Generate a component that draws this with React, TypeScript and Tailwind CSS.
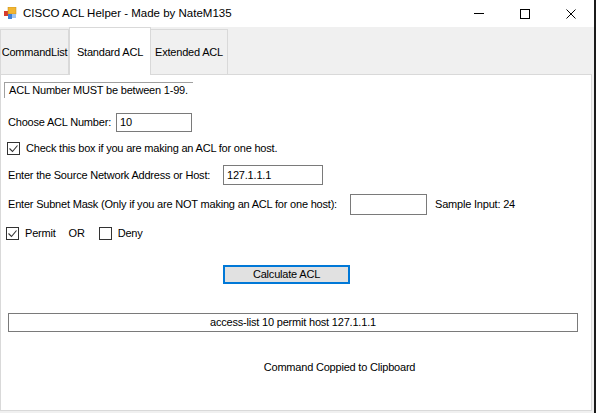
import React from 'react'

// Small Windows-style checkbox
function Check({ checked }: { checked: boolean }) {
  return (
    <span className="flex h-[13px] w-[13px] shrink-0 items-center justify-center border border-[#333333] bg-white">
      {checked && (
        <svg width="11" height="11" viewBox="0 0 11 11" fill="none">
          <path d="M1.5 5.5l3 3 5-6" stroke="#333333" strokeWidth="1.1" />
        </svg>
      )}
    </span>
  )
}

function AppIcon() {
  return (
    <svg width="13" height="13" viewBox="0 0 13 13">
      <rect x="0" y="4" width="5" height="5" fill="#d63b2f" />
      <rect x="4" y="0" width="8" height="7" fill="#f2b531" stroke="#c08a1a" strokeWidth="0.5" />
      <rect x="4" y="7" width="4" height="5" fill="#3c7fd6" />
      <rect x="8" y="7" width="4" height="4" fill="#9fc3ef" />
    </svg>
  )
}

export default function App() {
  return (
    <div
      className="h-[413px] w-[596px] overflow-hidden whitespace-nowrap border-r-2 border-[#1b1b1b] bg-[#f0f0f0] text-[11px] tracking-[-0.2px] text-black"
      style={{ fontFamily: '"Liberation Sans", Arial, sans-serif' }}
    >
      {/* Title bar */}
      <div className="flex h-[27px] items-center bg-white tracking-normal">
        <div className="ml-[4px] mr-[6px] flex items-center">
          <AppIcon />
        </div>
        <span className="text-[11.5px]">CISCO ACL Helper - Made by NateM135</span>
        <div className="ml-auto flex h-full items-center">
          <div className="flex h-full w-[46px] items-center justify-center">
            <span className="block h-px w-[10px] bg-black" />
          </div>
          <div className="flex h-full w-[46px] items-center justify-center">
            <span className="block h-[10px] w-[10px] border border-black" />
          </div>
          <div className="flex h-full w-[46px] items-center justify-center">
            <svg width="10" height="10" viewBox="0 0 10 10">
              <path d="M0.5 0.5l9 9M9.5 0.5l-9 9" stroke="#000" strokeWidth="1" />
            </svg>
          </div>
        </div>
      </div>

      {/* Tabs */}
      <div className="flex h-[47px] items-end">
        <div className="flex h-[45px] w-[69px] items-center justify-center border border-b-0 border-[#d9d9d9] bg-[#f0f0f0]">
          CommandList
        </div>
        <div className="relative z-10 -mb-px flex h-[48px] w-[82px] items-start justify-center border border-b-0 border-[#d9d9d9] bg-white pt-[16px]">
          Standard ACL
        </div>
        <div className="flex h-[45px] w-[77px] items-center justify-center border border-b-0 border-l-0 border-[#d9d9d9] bg-[#f0f0f0]">
          Extended ACL
        </div>
      </div>

      {/* Tab page */}
      <div className="flex h-[337px] w-[592px] flex-col border border-[#d9d9d9] bg-white">
        <div className="ml-[3px] mt-[7px] h-[16px] w-[189px] border-l border-t border-[#a0a0a0] pl-[4px] leading-[15px]">
          ACL Number MUST be between 1-99.
        </div>

        <div className="ml-[7px] mt-[15px] flex items-center">
          <span className="w-[108px]">Choose ACL Number:</span>
          <div className="flex h-[19px] w-[76px] items-center border border-[#7a7a7a] px-[3px]">10</div>
        </div>

        <div className="ml-[6px] mt-[9px] flex h-[14px] items-center gap-[6px]">
          <Check checked />
          <span>Check this box if you are making an ACL for one host.</span>
        </div>

        <div className="ml-[7px] mt-[10px] flex items-center">
          <span className="w-[215px]">Enter the Source Network Address or Host:</span>
          <div className="flex h-[20px] w-[100px] items-center border border-[#7a7a7a] px-[3px]">127.1.1.1</div>
        </div>

        <div className="ml-[7px] mt-[9px] flex items-center">
          <span className="w-[342px]">Enter Subnet Mask (Only if you are NOT making an ACL for one host):</span>
          <div className="h-[21px] w-[77px] border border-[#7a7a7a]" />
          <span className="ml-[8px]">Sample Input: 24</span>
        </div>

        <div className="ml-[5px] mt-[11px] flex h-[14px] items-center">
          <Check checked />
          <span className="ml-[6px]">Permit</span>
          <span className="ml-[13px]">OR</span>
          <span className="ml-[14px]"><Check checked={false} /></span>
          <span className="ml-[6px]">Deny</span>
        </div>

        <button className="ml-[223px] mt-[26px] flex h-[17px] w-[125px] items-center justify-center border border-[#0078d7] bg-[#e1e1e1] outline outline-1 outline-[#0078d7]">
          Calculate ACL
        </button>

        <div className="ml-[7px] mt-[30px] flex h-[19px] w-[570px] items-center justify-center border border-[#7a7a7a]">
          access-list 10 permit host 127.1.1.1
        </div>

        <div className="mt-[27px] flex w-[590px] justify-center">
          <span className="ml-[87px]">Command Coppied to Clipboard</span>
        </div>
      </div>
    </div>
  )
}
